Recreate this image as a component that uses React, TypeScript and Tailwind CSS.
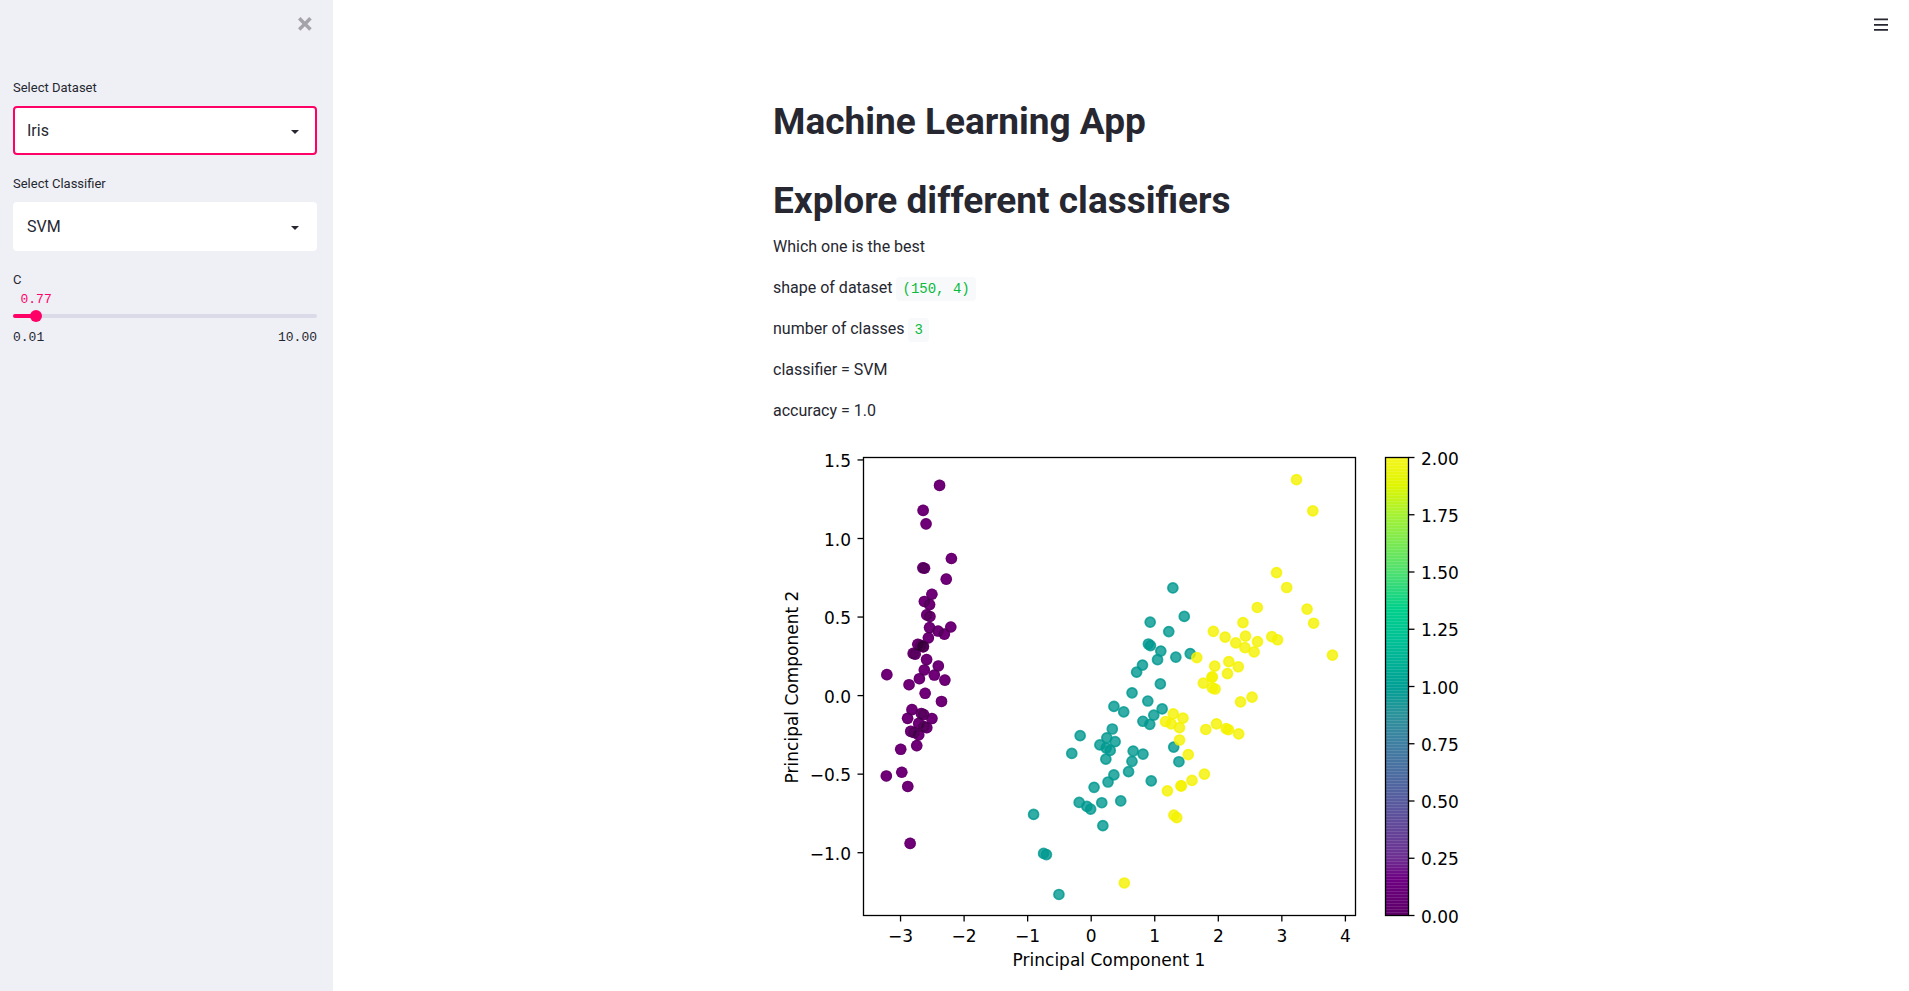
import { useId, useState } from "react";

type Measurement = [number, number, number, number];

const SETOSA = `5.1,3.5,1.4,0.2 4.9,3.0,1.4,0.2 4.7,3.2,1.3,0.2 4.6,3.1,1.5,0.2 5.0,3.6,1.4,0.2 5.4,3.9,1.7,0.4 4.6,3.4,1.4,0.3 5.0,3.4,1.5,0.2 4.4,2.9,1.4,0.2 4.9,3.1,1.5,0.1
5.4,3.7,1.5,0.2 4.8,3.4,1.6,0.2 4.8,3.0,1.4,0.1 4.3,3.0,1.1,0.1 5.8,4.0,1.2,0.2 5.7,4.4,1.5,0.4 5.4,3.9,1.3,0.4 5.1,3.5,1.4,0.3 5.7,3.8,1.7,0.3 5.1,3.8,1.5,0.3
5.4,3.4,1.7,0.2 5.1,3.7,1.5,0.4 4.6,3.6,1.0,0.2 5.1,3.3,1.7,0.5 4.8,3.4,1.9,0.2 5.0,3.0,1.6,0.2 5.0,3.4,1.6,0.4 5.2,3.5,1.5,0.2 5.2,3.4,1.4,0.2 4.7,3.2,1.6,0.2
4.8,3.1,1.6,0.2 5.4,3.4,1.5,0.4 5.2,4.1,1.5,0.1 5.5,4.2,1.4,0.2 4.9,3.1,1.5,0.2 5.0,3.2,1.2,0.2 5.5,3.5,1.3,0.2 4.9,3.6,1.4,0.1 4.4,3.0,1.3,0.2 5.1,3.4,1.5,0.2
5.0,3.5,1.3,0.3 4.5,2.3,1.3,0.3 4.4,3.2,1.3,0.2 5.0,3.5,1.6,0.6 5.1,3.8,1.9,0.4 4.8,3.0,1.4,0.3 5.1,3.8,1.6,0.2 4.6,3.2,1.4,0.2 5.3,3.7,1.5,0.2 5.0,3.3,1.4,0.2`;

const VERSICOLOR = `7.0,3.2,4.7,1.4 6.4,3.2,4.5,1.5 6.9,3.1,4.9,1.5 5.5,2.3,4.0,1.3 6.5,2.8,4.6,1.5 5.7,2.8,4.5,1.3 6.3,3.3,4.7,1.6 4.9,2.4,3.3,1.0 6.6,2.9,4.6,1.3 5.2,2.7,3.9,1.4
5.0,2.0,3.5,1.0 5.9,3.0,4.2,1.5 6.0,2.2,4.0,1.0 6.1,2.9,4.7,1.4 5.6,2.9,3.6,1.3 6.7,3.1,4.4,1.4 5.6,3.0,4.5,1.5 5.8,2.7,4.1,1.0 6.2,2.2,4.5,1.5 5.6,2.5,3.9,1.1
5.9,3.2,4.8,1.8 6.1,2.8,4.0,1.3 6.3,2.5,4.9,1.5 6.1,2.8,4.7,1.2 6.4,2.9,4.3,1.3 6.6,3.0,4.4,1.4 6.8,2.8,4.8,1.4 6.7,3.0,5.0,1.7 6.0,2.9,4.5,1.5 5.7,2.6,3.5,1.0
5.5,2.4,3.8,1.1 5.5,2.4,3.7,1.0 5.8,2.7,3.9,1.2 6.0,2.7,5.1,1.6 5.4,3.0,4.5,1.5 6.0,3.4,4.5,1.6 6.7,3.1,4.7,1.5 6.3,2.3,4.4,1.3 5.6,3.0,4.1,1.3 5.5,2.5,4.0,1.3
5.5,2.6,4.4,1.2 6.1,3.0,4.6,1.4 5.8,2.6,4.0,1.2 5.0,2.3,3.3,1.0 5.6,2.7,4.2,1.3 5.7,3.0,4.2,1.2 5.7,2.9,4.2,1.3 6.2,2.9,4.3,1.3 5.1,2.5,3.0,1.1 5.7,2.8,4.1,1.3`;

const VIRGINICA = `6.3,3.3,6.0,2.5 5.8,2.7,5.1,1.9 7.1,3.0,5.9,2.1 6.3,2.9,5.6,1.8 6.5,3.0,5.8,2.2 7.6,3.0,6.6,2.1 4.9,2.5,4.5,1.7 7.3,2.9,6.3,1.8 6.7,2.5,5.8,1.8 7.2,3.6,6.1,2.5
6.5,3.2,5.1,2.0 6.4,2.7,5.3,1.9 6.8,3.0,5.5,2.1 5.7,2.5,5.0,2.0 5.8,2.8,5.1,2.4 6.4,3.2,5.3,2.3 6.5,3.0,5.5,1.8 7.7,3.8,6.7,2.2 7.7,2.6,6.9,2.3 6.0,2.2,5.0,1.5
6.9,3.2,5.7,2.3 5.6,2.8,4.9,2.0 7.7,2.8,6.7,2.0 6.3,2.7,4.9,1.8 6.7,3.3,5.7,2.1 7.2,3.2,6.0,1.8 6.2,2.8,4.8,1.8 6.1,3.0,4.9,1.8 6.4,2.8,5.6,2.1 7.2,3.0,5.8,1.6
7.4,2.8,6.1,1.9 7.9,3.8,6.4,2.0 6.4,2.8,5.6,2.2 6.3,2.8,5.1,1.5 6.1,2.6,5.6,1.4 7.7,3.0,6.1,2.3 6.3,3.4,5.6,2.4 6.4,3.1,5.5,1.8 6.0,3.0,4.8,1.8 6.9,3.1,5.4,2.1
6.7,3.1,5.6,2.4 6.9,3.1,5.1,2.3 5.8,2.7,5.1,1.9 6.8,3.2,5.9,2.3 6.7,3.3,5.7,2.5 6.7,3.0,5.2,2.3 6.3,2.5,5.0,1.9 6.5,3.0,5.2,2.0 6.2,3.4,5.4,2.3 5.9,3.0,5.1,1.8`;

const MEAN: Measurement = [5.843333, 3.057333, 3.758, 1.199333];
const PC1: Measurement = [0.361387, -0.084523, 0.856671, 0.358289];
const PC2: Measurement = [0.656589, 0.730161, -0.173373, -0.075481];

const PLOT = { left: 90.5, right: 582.5, top: 17.5, bottom: 475.5 };
const BAR = { left: 612.5, right: 635.5 };
const toX = (v: number) => 318.2 + v * 63.55;
const toY = (v: number) => 255.6 - v * 157.1;
const minus = (s: string) => s.replace("-", "\u2212");

const project = (row: Measurement, axis: Measurement) =>
  row.reduce((sum, v, i) => sum + (v - MEAN[i]) * axis[i], 0);

const toPoints = (text: string) =>
  text.split(/\s+/).map((entry) => {
    const row = entry.split(",").map(Number) as Measurement;
    return { x: toX(project(row, PC1)), y: toY(project(row, PC2)) };
  });

const SETOSA_POINTS = toPoints(SETOSA);
const LIGHT_CLASSES = [
  { color: "#009990", points: toPoints(VERSICOLOR) },
  { color: "#f5f300", points: toPoints(VIRGINICA) },
];

const X_TICKS = [-3, -2, -1, 0, 1, 2, 3, 4];
const Y_TICKS = [1.5, 1.0, 0.5, 0.0, -0.5, -1.0];
const BAR_TICKS = [2, 1.75, 1.5, 1.25, 1, 0.75, 0.5, 0.25, 0];

const BAR_STOPS = [
  ["0%", "#f5f51e"],
  ["6%", "#e0f500"],
  ["12.5%", "#a5f233"],
  ["25%", "#4fe070"],
  ["33%", "#00d08a"],
  ["40%", "#00c096"],
  ["50%", "#00a094"],
  ["56%", "#2b939a"],
  ["62.5%", "#3f7fa2"],
  ["75%", "#585c9f"],
  ["87.5%", "#6e3092"],
  ["92%", "#6e0082"],
  ["100%", "#5e0068"],
];

function ScatterPlot() {
  const gradient = useId();
  return (
    <svg
      viewBox="0 0 696 540"
      className="block w-full font-['DejaVu_Sans',sans-serif] text-[17px]"
      role="img"
      aria-label="Principal Component 1 against Principal Component 2"
    >
      <defs>
        <linearGradient id={gradient} x1="0" y1="0" x2="0" y2="1">
          {BAR_STOPS.map(([offset, color]) => (
            <stop key={offset} offset={offset} stopColor={color} />
          ))}
        </linearGradient>
      </defs>

      {/* Setosa: an opaque undercoat, then translucent discs that darken where points overlap. */}
      <g fill="#8c0096">
        {SETOSA_POINTS.map((p, i) => (
          <circle key={i} cx={p.x} cy={p.y} r="5.8" />
        ))}
      </g>
      <g fill="#000" fillOpacity="0.2" stroke="#000" strokeOpacity="0.08" strokeWidth="1.6">
        {SETOSA_POINTS.map((p, i) => (
          <g key={i}>
            <circle cx={p.x} cy={p.y} r="5.8" stroke="none" />
            <circle cx={p.x} cy={p.y} r="5" fill="none" />
          </g>
        ))}
      </g>
      {LIGHT_CLASSES.map(({ color, points }) => (
        <g key={color} fill={color} stroke={color} strokeWidth="1.7" fillOpacity="0.8" strokeOpacity="0.8">
          {points.map((p, i) => (
            <circle key={i} cx={p.x} cy={p.y} r="5" />
          ))}
        </g>
      ))}

      <g stroke="#000" strokeWidth="1.3" fill="none">
        <rect x={PLOT.left} y={PLOT.top} width={PLOT.right - PLOT.left} height={PLOT.bottom - PLOT.top} />
        {X_TICKS.map((v) => (
          <path key={v} d={`M${toX(v)} ${PLOT.bottom}v6`} />
        ))}
        {Y_TICKS.map((v) => (
          <path key={v} d={`M${PLOT.left} ${toY(v)}h-6`} />
        ))}
      </g>

      {X_TICKS.map((v) => (
        <text key={v} x={toX(v)} y="502" textAnchor="middle">
          {minus(String(v))}
        </text>
      ))}
      {Y_TICKS.map((v) => (
        <text key={v} x="78" y={toY(v) + 7} textAnchor="end">
          {minus(v.toFixed(1))}
        </text>
      ))}
      <text x="336" y="526" textAnchor="middle">
        Principal Component 1
      </text>
      <text transform="translate(25 247) rotate(-90)" textAnchor="middle">
        Principal Component 2
      </text>

      <rect
        x={BAR.left}
        y={PLOT.top}
        width={BAR.right - BAR.left}
        height={PLOT.bottom - PLOT.top}
        fill={`url(#${gradient})`}
      />
      <g stroke="#fff" strokeOpacity="0.12" strokeWidth="1">
        {Array.from({ length: 152 }, (_, i) => (
          <path key={i} d={`M${BAR.left} ${PLOT.top + 2 + i * 3}H${BAR.right}`} />
        ))}
      </g>
      <rect
        x={BAR.left}
        y={PLOT.top}
        width={BAR.right - BAR.left}
        height={PLOT.bottom - PLOT.top}
        fill="none"
        stroke="#000"
        strokeWidth="1.3"
      />
      {BAR_TICKS.map((v) => {
        const y = PLOT.bottom - (v / 2) * (PLOT.bottom - PLOT.top);
        return (
          <g key={v}>
            <path d={`M${BAR.right} ${y}h6`} stroke="#000" strokeWidth="1.3" />
            <text x="648" y={y + 7}>
              {v.toFixed(2)}
            </text>
          </g>
        );
      })}
    </svg>
  );
}

function SelectBox({
  label,
  options,
  initial,
  active = false,
}: {
  label: string;
  options: string[];
  initial: string;
  active?: boolean;
}) {
  const id = useId();
  const [value, setValue] = useState(initial);
  return (
    <div>
      <label htmlFor={id} className="block pb-2 text-[13px] leading-5">
        {label}
      </label>
      <div className="relative">
        <select
          id={id}
          value={value}
          onChange={(e) => setValue(e.target.value)}
          className={`block h-[49px] w-full appearance-none rounded border-2 bg-white px-3 text-base outline-none ${
            active ? "border-[#ff0066]" : "border-white"
          }`}
        >
          {options.map((option) => (
            <option key={option}>{option}</option>
          ))}
        </select>
        <svg
          viewBox="0 0 8 4"
          className="pointer-events-none absolute top-6 right-[18px] h-1 w-2"
          fill="#262730"
          aria-hidden="true"
        >
          <path d="M0 0l4 4 4-4z" />
        </svg>
      </div>
    </div>
  );
}

function Slider({ label, min, max, initial }: { label: string; min: number; max: number; initial: number }) {
  const id = useId();
  const [value, setValue] = useState(initial);
  const percent = `${((value - min) / (max - min)) * 100}%`;
  return (
    <div>
      <label htmlFor={id} className="block text-[13px] leading-5">
        {label}
      </label>
      <div className="relative h-6 font-['Liberation_Mono',monospace] text-[13px] leading-5 text-[#ff0066]">
        <output htmlFor={id} className="absolute top-0 -translate-x-1/2" style={{ left: percent }}>
          {value.toFixed(2)}
        </output>
      </div>
      <div className="relative h-1 rounded bg-[#dadae8]">
        <div className="h-1 rounded-l bg-[#ff0066]" style={{ width: percent }} />
        <input
          id={id}
          type="range"
          min={min}
          max={max}
          step={0.01}
          value={value}
          onChange={(e) => setValue(Number(e.target.value))}
          className="absolute -inset-x-1.5 -top-1 m-0 h-3 appearance-none bg-transparent outline-none [&::-webkit-slider-thumb]:size-3 [&::-webkit-slider-thumb]:appearance-none [&::-webkit-slider-thumb]:rounded-full [&::-webkit-slider-thumb]:bg-[#ff0066]"
        />
      </div>
      <div className="flex justify-between pt-2.5 font-['Liberation_Mono',monospace] text-[13px] leading-5">
        <span>{min.toFixed(2)}</span>
        <span>{max.toFixed(2)}</span>
      </div>
    </div>
  );
}

function Code({ children }: { children: string }) {
  return (
    <code className="rounded bg-[#f8f9fb] px-1.5 py-1 font-['Liberation_Mono',monospace] text-sm text-[#09bb3b]">
      {children}
    </code>
  );
}

export default function App() {
  return (
    <div className="flex min-h-screen bg-white font-[Roboto,sans-serif] text-[#262730]">
      <aside className="w-[333px] shrink-0 bg-[#eff0f6] pr-4 pl-[13px]">
        <div className="flex h-[78px] justify-end pt-[17px] pr-[5px]">
          <button type="button" aria-label="Close sidebar" className="size-3.5 text-[#a3a3a8]">
            <svg viewBox="0 0 8 8" className="block size-3.5" fill="currentColor" aria-hidden="true">
              <path d="M1.41 0l-1.41 1.41.72.72 1.78 1.81-1.78 1.78-.72.69 1.41 1.44.72-.72 1.81-1.81 1.78 1.81.69.72 1.44-1.44-.72-.69-1.81-1.78 1.81-1.81.72-.72-1.44-1.41-.69.72-1.78 1.78-1.81-1.78-.72-.72z" />
            </svg>
          </button>
        </div>
        <div className="flex flex-col gap-[19px]">
          <SelectBox label="Select Dataset" options={["Iris", "Breast Cancer", "Wine"]} initial="Iris" active />
          <SelectBox label="Select Classifier" options={["KNN", "SVM", "Random Forest"]} initial="SVM" />
          <Slider label="C" min={0.01} max={10} initial={0.77} />
        </div>
      </aside>

      <div className="min-w-0 flex-1">
        <header className="flex h-12 justify-end pt-[18px] pr-[21px]">
          <button type="button" aria-label="Menu" className="size-3.5">
            <svg viewBox="0 0 14 14" className="block size-3.5" fill="currentColor" aria-hidden="true">
              <path d="M0 .6h14v1.6H0zM0 6h14v1.7H0zM0 11.1h14v1.7H0z" />
            </svg>
          </button>
        </header>
        <main className="mx-auto max-w-[696px] pt-[50px]">
          <h1 className="text-[37px] leading-[47px] font-bold">Machine Learning App</h1>
          <h1 className="pt-8 text-[37px] leading-[47px] font-bold">Explore different classifiers</h1>
          <div className="flex flex-col gap-4 pt-2.5 pb-[17px] leading-[25px]">
            <p>Which one is the best</p>
            <p>
              shape of dataset <Code>(150, 4)</Code>
            </p>
            <p>
              number of classes <Code>3</Code>
            </p>
            <p>classifier = SVM</p>
            <p>accuracy = 1.0</p>
          </div>
          <ScatterPlot />
        </main>
      </div>
    </div>
  );
}
